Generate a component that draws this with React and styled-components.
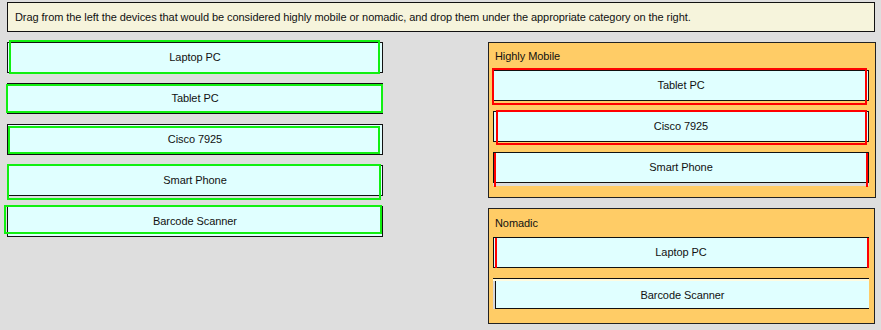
import React from "react";
import styled, { createGlobalStyle } from "styled-components";

const Global = createGlobalStyle`
  html, body { margin: 0; padding: 0; background: #dedede; }
  body { font-family: "Liberation Sans", Arial, sans-serif; font-size: 11px; color: #111; letter-spacing: -0.07px; }
`;

const Page = styled.div`
  width: 881px;
  height: 330px;
  box-sizing: border-box;
  padding: 2px 0 0 7px;
`;

const Instructions = styled.div`
  width: 868px;
  height: 30px;
  box-sizing: border-box;
  border: 1px solid #111;
  background: #f6f4dc;
  padding: 0 0 1px 7px;
  display: flex;
  align-items: center;
  font-size: 11px;
`;

const Main = styled.div`
  display: flex;
  margin-top: 10px;
  gap: 105px;
`;

const LeftColumn = styled.div`
  display: flex;
  flex-direction: column;
  gap: 10px;
  width: 376px;
`;

const RightColumn = styled.div`
  display: flex;
  flex-direction: column;
  gap: 10px;
  width: 388px;
`;

const Item = styled.div`
  position: relative;
  height: 31px;
  box-sizing: border-box;
  border: 1px solid #111;
  background: #e0ffff;
  display: flex;
  align-items: center;
  justify-content: center;
  padding-bottom: 2px;
  font-size: 11px;
`;

const Highlight = styled.div`
  position: absolute;
  left: ${(p) => p.$l}px;
  top: ${(p) => p.$t}px;
  width: ${(p) => p.$w}px;
  height: ${(p) => p.$h}px;
  box-sizing: border-box;
  border-style: solid;
  border-color: ${(p) => p.$color};
  border-width: ${(p) => (p.$sidesOnly ? "0 2px" : "2px")};
  pointer-events: none;
`;

const Panel = styled.div`
  height: ${(p) => p.$h}px;
  width: ${(p) => p.$w}px;
  box-sizing: border-box;
  border: 1px solid #222;
  background: #ffcc66;
  padding: ${(p) => p.$pt}px 0 0 4px;
`;

const PanelTitle = styled.div`
  line-height: 14px;
  padding-left: 2px;
  margin-bottom: 7px;
  font-size: 11px;
`;

const PanelItems = styled.div`
  display: flex;
  flex-direction: column;
  gap: ${(p) => p.$gap}px;
  width: 376px;
`;

const ShadowWrap = styled.div`
  border-bottom: 3px solid #dcdcdc;
`;

const SlotFrame = styled.div`
  border-top: 1px solid #111;
  padding-top: 2px;
  background: linear-gradient(to bottom, #fffbe0 0 2px, transparent 2px);
  display: flex;
`;

const SlotGutter = styled.div`
  width: 2px;
  background: #d8d8d8;
`;

const SlotItem = styled.div`
  flex: 1;
  height: 28px;
  box-sizing: border-box;
  border-left: 1px solid #111;
  border-bottom: 1px solid #111;
  background: #e0ffff;
  display: flex;
  align-items: center;
  justify-content: center;
  font-size: 11px;
`;

const leftItems = [
  { label: "Laptop PC", hl: { $l: 1, $t: -3, $w: 371, $h: 34 } },
  { label: "Tablet PC", hl: { $l: -2, $t: 0, $w: 377, $h: 29 } },
  { label: "Cisco 7925", hl: { $l: 0, $t: 1, $w: 372, $h: 28 } },
  { label: "Smart Phone", hl: { $l: -1, $t: -2, $w: 374, $h: 36 } },
  { label: "Barcode Scanner", hl: { $l: -4, $t: -2, $w: 378, $h: 29 } },
];

export default function App() {
  return (
    <>
      <Global />
      <Page>
        <Instructions>
          Drag from the left the devices that would be considered highly mobile or nomadic, and drop them under the appropriate category on the right.
        </Instructions>
        <Main>
          <LeftColumn>
            {leftItems.map((it) => (
              <Item key={it.label}>
                {it.label}
                <Highlight $color="#11f011" {...it.hl} />
              </Item>
            ))}
          </LeftColumn>
          <RightColumn>
            <Panel $h={156} $w={388} $pt={6}>
              <PanelTitle>Highly Mobile</PanelTitle>
              <PanelItems $gap={10}>
                <Item>
                  Tablet PC
                  <Highlight $color="#ff0000" $l={-2} $t={-3} $w={375} $h={37} />
                </Item>
                <Item>
                  Cisco 7925
                  <Highlight $color="#ff0000" $l={2} $t={-2} $w={371} $h={35} />
                </Item>
                <ShadowWrap>
                  <Item>
                    Smart Phone
                    <Highlight $color="#ff0000" $sidesOnly $l={0} $t={0} $w={374} $h={34} />
                  </Item>
                </ShadowWrap>
              </PanelItems>
            </Panel>
            <Panel $h={116} $w={387} $pt={7}>
              <PanelTitle>Nomadic</PanelTitle>
              <PanelItems $gap={10}>
                <Item>
                  Laptop PC
                  <Highlight $color="#ff0000" $sidesOnly $l={1} $t={0} $w={374} $h={30} />
                </Item>
                <SlotFrame>
                  <SlotGutter />
                  <SlotItem>Barcode Scanner</SlotItem>
                </SlotFrame>
              </PanelItems>
            </Panel>
          </RightColumn>
        </Main>
      </Page>
    </>
  );
}
